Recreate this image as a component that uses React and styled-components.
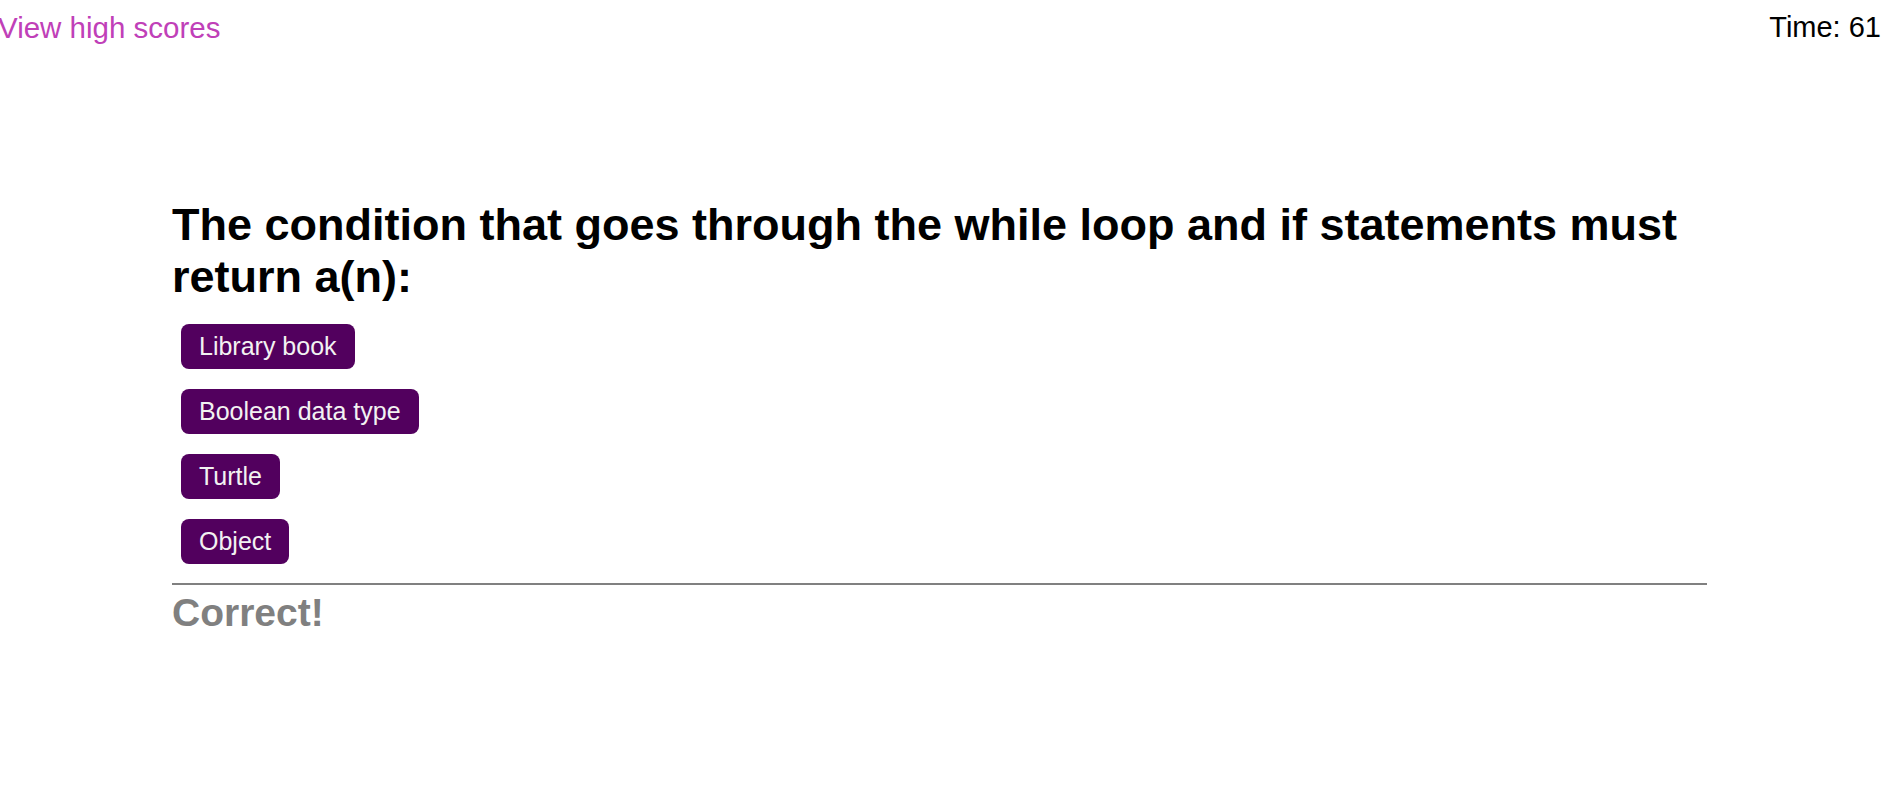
import React from "react";
import styled, { createGlobalStyle } from "styled-components";

const Global = createGlobalStyle`
  html, body { margin: 0; padding: 0; background: #ffffff; }
  body { font-family: "Liberation Sans", Arial, sans-serif; }
`;

const Header = styled.header`
  display: flex;
  justify-content: space-between;
  align-items: flex-start;
  padding: 11px 18px 0 0;
  font-size: 29px;
  line-height: normal;
`;

const ScoresLink = styled.a`
  color: #c040b8;
  font-size: 29.5px;
  text-decoration: none;
  margin-left: -2px;
  cursor: pointer;
`;

const Timer = styled.div`
  color: #000000;
`;

const Main = styled.main`
  width: 1535px;
  margin-left: 172px;
  padding-top: 154px;
`;

const Question = styled.h1`
  margin: 0 0 21px 0;
  font-size: 45px;
  font-weight: 700;
  line-height: normal;
  color: #000000;
`;

const Choices = styled.div`
  display: flex;
  flex-direction: column;
  align-items: flex-start;
  gap: 20px;
  padding-left: 9px;
`;

const Choice = styled.button`
  font-family: "Liberation Sans", Arial, sans-serif;
  font-size: 25px;
  line-height: 29px;
  height: 45px;
  padding: 0 18px;
  border: none;
  border-radius: 8px;
  background: #52005e;
  color: #f2f2f2;
  cursor: pointer;
`;

const Divider = styled.hr`
  margin: 19px 0 0 0;
  border: none;
  height: 2px;
  background: #808080;
`;

const Feedback = styled.p`
  margin: 6px 0 0 0;
  font-size: 39px;
  font-weight: 700;
  line-height: normal;
  color: #808080;
`;

const choices = ["Library book", "Boolean data type", "Turtle", "Object"];

export default function App() {
  return (
    <>
      <Global />
      <Header>
        <ScoresLink>View high scores</ScoresLink>
        <Timer>Time: 61</Timer>
      </Header>
      <Main>
        <Question>
          The condition that goes through the while loop and if statements must return a(n):
        </Question>
        <Choices>
          {choices.map((c) => (
            <Choice key={c}>{c}</Choice>
          ))}
        </Choices>
        <Divider />
        <Feedback>Correct!</Feedback>
      </Main>
    </>
  );
}
